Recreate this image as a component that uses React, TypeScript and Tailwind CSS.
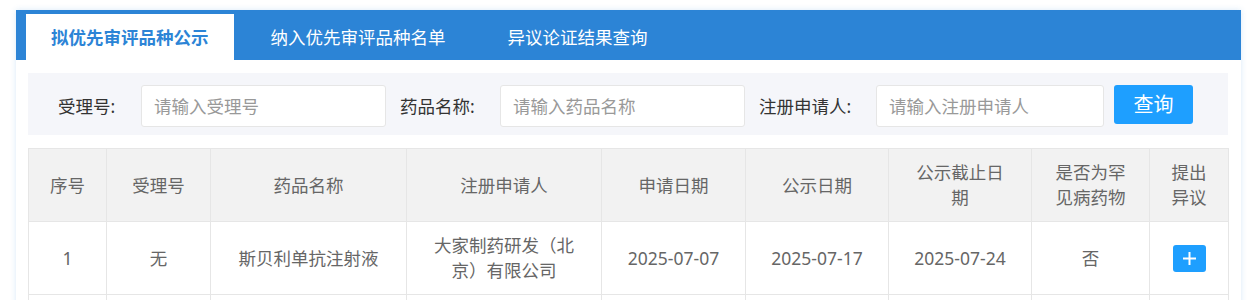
import React from 'react';

const tabs = ['拟优先审评品种公示', '纳入优先审评品种名单', '异议论证结果查询'];

const columns: { title: React.ReactNode; width: number }[] = [
  { title: '序号', width: 78 },
  { title: '受理号', width: 104 },
  { title: '药品名称', width: 196 },
  { title: '注册申请人', width: 195 },
  { title: '申请日期', width: 144 },
  { title: '公示日期', width: 143 },
  { title: '公示截止日期', width: 143 },
  { title: '是否为罕见病药物', width: 118 },
  { title: '提出异议', width: 79 },
];

const rows = [
  {
    no: '1',
    acceptNo: '无',
    name: '斯贝利单抗注射液',
    applicant: '大家制药研发（北京）有限公司',
    applyDate: '2025-07-07',
    publicDate: '2025-07-17',
    endDate: '2025-07-24',
    rare: '否',
  },
];

function SearchField({ label, placeholder, labelWidth, width }: { label: string; placeholder: string; labelWidth: number; width: number }) {
  return (
    <div className="flex items-center">
      <span className="shrink-0 text-[17.5px] text-[#333] whitespace-nowrap" style={{ width: labelWidth }}>{label}</span>
      <input
        placeholder={placeholder}
        className="h-[42px] rounded-[3px] border border-[#e6e6e6] bg-white px-[12px] text-[17.5px] text-[#333] outline-none placeholder:text-[#999]"
        style={{ width }}
      />
    </div>
  );
}

export default function App() {
  const cell = 'border border-[#e6e6e6] px-[19px] py-[11px] text-center align-middle leading-[25px]';
  return (
    <div className="min-h-screen bg-white pt-[10px] font-['Noto_Sans','Noto_Sans_CJK_SC',sans-serif]">
      <div className="ml-[16px] w-[1225px] bg-white shadow-[0_0_6px_rgba(44,132,214,0.18)] pb-[20px]">
        {/* tab bar */}
        <div className="flex h-[50px] items-end gap-[12px] bg-[#2c84d6] pl-[10px]">
          {tabs.map((t, i) => (
            <div
              key={t}
              className={`flex h-[46px] items-center px-[25px] text-[17.5px] ${
                i === 0 ? 'bg-white font-bold text-[#2c84d6]' : 'text-white'
              }`}
            >
              {t}
            </div>
          ))}
        </div>

        <div className="px-[12px] pt-[13px]">
          {/* search panel */}
          <div className="flex w-[1200px] items-center gap-[14px] bg-[#f5f6fa] pl-[30px] pt-[12px] pb-[8px]">
            <SearchField label="受理号:" placeholder="请输入受理号" labelWidth={83} width={245} />
            <SearchField label="药品名称:" placeholder="请输入药品名称" labelWidth={100} width={245} />
            <SearchField label="注册申请人:" placeholder="请输入注册申请人" labelWidth={117} width={228} />
            <button className="-ml-[4px] h-[39px] w-[79px] self-start rounded-[3px] bg-[#1e9fff] text-[20px] text-white">
              查询
            </button>
          </div>

          {/* table */}
          <table className="mt-[13px] w-[1200px] table-fixed border-collapse text-[17.5px] text-[#666]">
            <colgroup>
              {columns.map((c, i) => (
                <col key={i} style={{ width: c.width }} />
              ))}
            </colgroup>
            <thead>
              <tr className="bg-[#f2f2f2]">
                {columns.map((c, i) => (
                  <th key={i} className={`${cell} font-normal`}>
                    {c.title}
                  </th>
                ))}
              </tr>
            </thead>
            <tbody>
              {rows.map((r) => (
                <tr key={r.no}>
                  <td className={cell}>{r.no}</td>
                  <td className={cell}>{r.acceptNo}</td>
                  <td className={cell}>{r.name}</td>
                  <td className={cell}>{r.applicant}</td>
                  <td className={cell}>{r.applyDate}</td>
                  <td className={cell}>{r.publicDate}</td>
                  <td className={cell}>{r.endDate}</td>
                  <td className={cell}>{r.rare}</td>
                  <td className={cell}>
                    <button className="mx-auto flex h-[27px] w-[33px] items-center justify-center rounded-[3px] bg-[#1e9fff]">
                      <svg width="15" height="15" viewBox="0 0 15 15">
                        <path d="M7.5 1v13M1 7.5h13" stroke="#fff" strokeWidth="2" />
                      </svg>
                    </button>
                  </td>
                </tr>
              ))}
              <tr>
                {columns.map((_, i) => (
                  <td key={i} className={`${cell} h-[74px]`} />
                ))}
              </tr>
            </tbody>
          </table>
        </div>
      </div>
    </div>
  );
}
